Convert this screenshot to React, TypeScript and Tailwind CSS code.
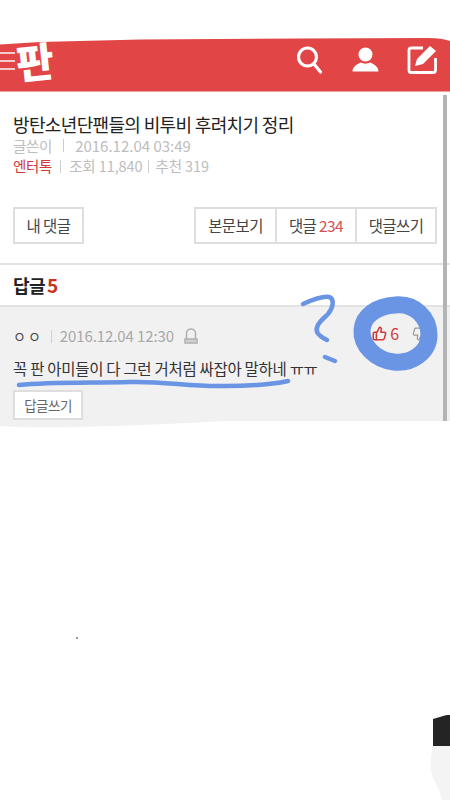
import React from "react";
import { ThumbsUp, ThumbsDown } from "lucide-react";

const F = { fontFamily: '"Noto Sans CJK KR", "Noto Sans", sans-serif' };

function Btn({ children, className = "" }: { children: React.ReactNode; className?: string }) {
  return (
    <div className={`flex h-full items-center justify-center text-[15.5px] tracking-[-0.6px] text-[#444] ${className}`}>
      {children}
    </div>
  );
}

export default function App() {
  return (
    <div className="relative h-[800px] w-[450px] overflow-hidden bg-white" style={F}>
      {/* header */}
      <header className="relative mt-[36px] flex h-[56px] items-center justify-end gap-[28px] border-b border-[#eda0a0] bg-[#e24545] pb-[8px] pr-[12px]">
        <svg className="absolute inset-x-0 top-0" width="450" height="10" viewBox="0 0 450 10">
          <path d="M0 0H450V5Q442 2 428 2L300 2.500L140 3.500L40 6L0 8.500Z" fill="#fff" />
        </svg>
        <div className="absolute left-0 top-[16px] flex w-[15px] flex-col gap-[6px]">
          <span className="h-[2px] bg-[#f6caca]" />
          <span className="h-[2px] bg-[#f6caca]" />
          <span className="h-[2px] bg-[#f6caca]" />
        </div>
        <span className="absolute left-[16px] top-[0px] -rotate-6 text-[41px] font-black leading-[48px] text-white">판</span>
        <svg width="25" height="28" viewBox="0 0 25 28" fill="none" stroke="#fff" strokeWidth="3.200" strokeLinecap="round" className="mr-[2px]">
          <circle cx="10.500" cy="11" r="9" />
          <path d="M17 18L23.500 26" />
        </svg>
        <svg width="27" height="25" viewBox="0 0 27 25" fill="#fff">
          <circle cx="13.500" cy="7.500" r="7" />
          <path d="M0.500 24.500C0.500 19 6 17 9 15.500C11 17 16 17 18 15.500C21 17 26.500 19 26.500 24.500Z" />
        </svg>
        <svg width="31" height="30" viewBox="0 0 31 30" fill="none">
          <path d="M16 3H4Q2 3 2 5V25Q2 27.500 4 27.500H26Q28.500 27.500 28.500 25V13" stroke="#fff" strokeWidth="2.800" />
          <path d="M8 21L10 14L23 1L29 6L16 19Z" fill="#fff" />
        </svg>
      </header>

      {/* article */}
      <section className="px-[13px] pt-[22px]">
        <h1 className="text-[18px] font-normal leading-[21px] tracking-[-0.65px] text-[#222]">
          방탄소년단팬들의 비투비 후려치기 정리
        </h1>
        <div className="flex h-[21px] items-center text-[14.5px] leading-[20px] text-[#bdbdbd]">
          <span className="tracking-[-0.3px]">글쓴이</span>
          <span className="mx-[11px] h-[13px] w-px bg-[#cccccc]" />
          <span className="text-[15px]">2016.12.04 03:49</span>
        </div>
        <div className="flex h-[20px] items-center text-[14.5px] leading-[20px] text-[#bdbdbd]">
          <span className="tracking-[-0.3px] text-[#d2383a]">엔터톡</span>
          <span className="mx-[8px] h-[13px] w-px bg-[#cccccc]" />
          <span className="tracking-[-0.1px]">조회 11,840</span>
          <span className="mx-[6px] h-[13px] w-px bg-[#cccccc]" />
          <span className="tracking-[-0.1px]">추천 319</span>
        </div>
        <div className="mt-[31px] flex h-[37px] justify-between">
          <Btn className="w-[71px] border-2 border-[#dedede]">내 댓글</Btn>
          <div className="flex w-[243px] divide-x-2 divide-[#dedede] border-2 border-[#dedede]">
            <Btn className="w-[81px]">본문보기</Btn>
            <Btn className="w-[80px]">
              댓글&nbsp;<span className="text-[#d75050]">234</span>
            </Btn>
            <Btn className="flex-1">댓글쓰기</Btn>
          </div>
        </div>
      </section>

      {/* replies */}
      <section className="mt-[19px] border-t-2 border-[#e3e3e3]">
        <h2 className="flex h-[40px] items-center px-[13px] text-[18px] font-bold tracking-[-0.6px] text-[#222]">
          답글<span className="ml-[2px] text-[19px] text-[#c9341a]">5</span>
        </h2>
        <div className="h-[125px] border-t-2 border-[#e3e3e3] bg-[#f1f1f1] px-[13px] pt-[17px]">
          <div className="flex h-[24px] items-center text-[15px] tracking-[-0.1px] text-[#a8a8a8]">
            <span className="text-[14px] tracking-[2px] text-[#444]">ㅇㅇ</span>
            <span className="mx-[8px] h-[13px] w-px bg-[#d0d0d0]" />
            <span>2016.12.04 12:30</span>
            <svg className="ml-[10px]" width="14" height="16" viewBox="0 0 14 16" fill="none" stroke="#b0b0b0" strokeWidth="1.500">
              <path d="M2.500 11V5.500C2.500 -0.500 11.500 -0.500 11.500 5.500V11" />
              <rect x="1" y="11" width="12" height="4" fill="#d0d0d0" />
            </svg>
            <div className="mb-[7px] ml-auto mr-[11px] flex items-center">
              <ThumbsUp size={15} color="#d33a3a" strokeWidth={2.500} className="mt-[2px]" />
              <span className="ml-[3px] text-[16px] text-[#d33a3a]">6</span>
              <ThumbsDown size={14} color="#999" className="ml-[13px] mt-[2px]" />
            </div>
          </div>
          <p className="mt-[8px] text-[15.5px] leading-[24px] tracking-[-0.3px] text-[#333]">
            꼭 판 아미들이 다 그런 거처럼 싸잡아 말하네 ㅠㅠ
          </p>
          <div className="mt-[10px] flex h-[30px] w-[70px] items-center justify-center border-2 border-[#dedede] bg-white text-[13.5px] tracking-[-0.5px] text-[#666]">
            답글쓰기
          </div>
        </div>
      </section>

      {/* scrollbar */}
      <div className="absolute left-[443px] top-[95px] h-[326px] w-[4px] bg-[#b4b4b4]" />

      {/* hand drawn marks */}
      <svg className="absolute inset-0" width="450" height="800" viewBox="0 0 450 800" fill="none" stroke="#6a94e4" strokeLinecap="round" strokeLinejoin="round">
        <path d="M303 304C312 300 322 296 329 297C335 299 333 308 328 314C322 320 315 325 317 332C319 336 323 338 327 340" strokeWidth="4.500" />
        <path d="M325 357L335 361" strokeWidth="4.500" />
        <path d="M19 385C50 382 90 383 130 382C165 381 190 387 225 386C250 386 270 385 288 381" strokeWidth="4.500" />
        <path d="M395 305C415 303 429 318 429 335C429 352 412 364 394 362C375 360 361 345 362 330C363 315 378 306 395 305Z" strokeWidth="17" />
        <path d="M0 426Q60 430 225 421L435 421L450 421V440H0Z" fill="#fff" stroke="none" />
      </svg>

      {/* photo fragments at the bottom */}
      <span className="absolute left-[76px] top-[637px] h-[2px] w-[2px] bg-[#999]" />
      <svg className="absolute bottom-0 right-0" width="20" height="85" viewBox="0 0 20 85">
        <path d="M3 4L20 -1V31H3Z" fill="#242424" />
        <path d="M2 31H20V85H12C10 72 3 68 1 55C0 48 2 40 2 31Z" fill="#f4f4f4" />
      </svg>
    </div>
  );
}
